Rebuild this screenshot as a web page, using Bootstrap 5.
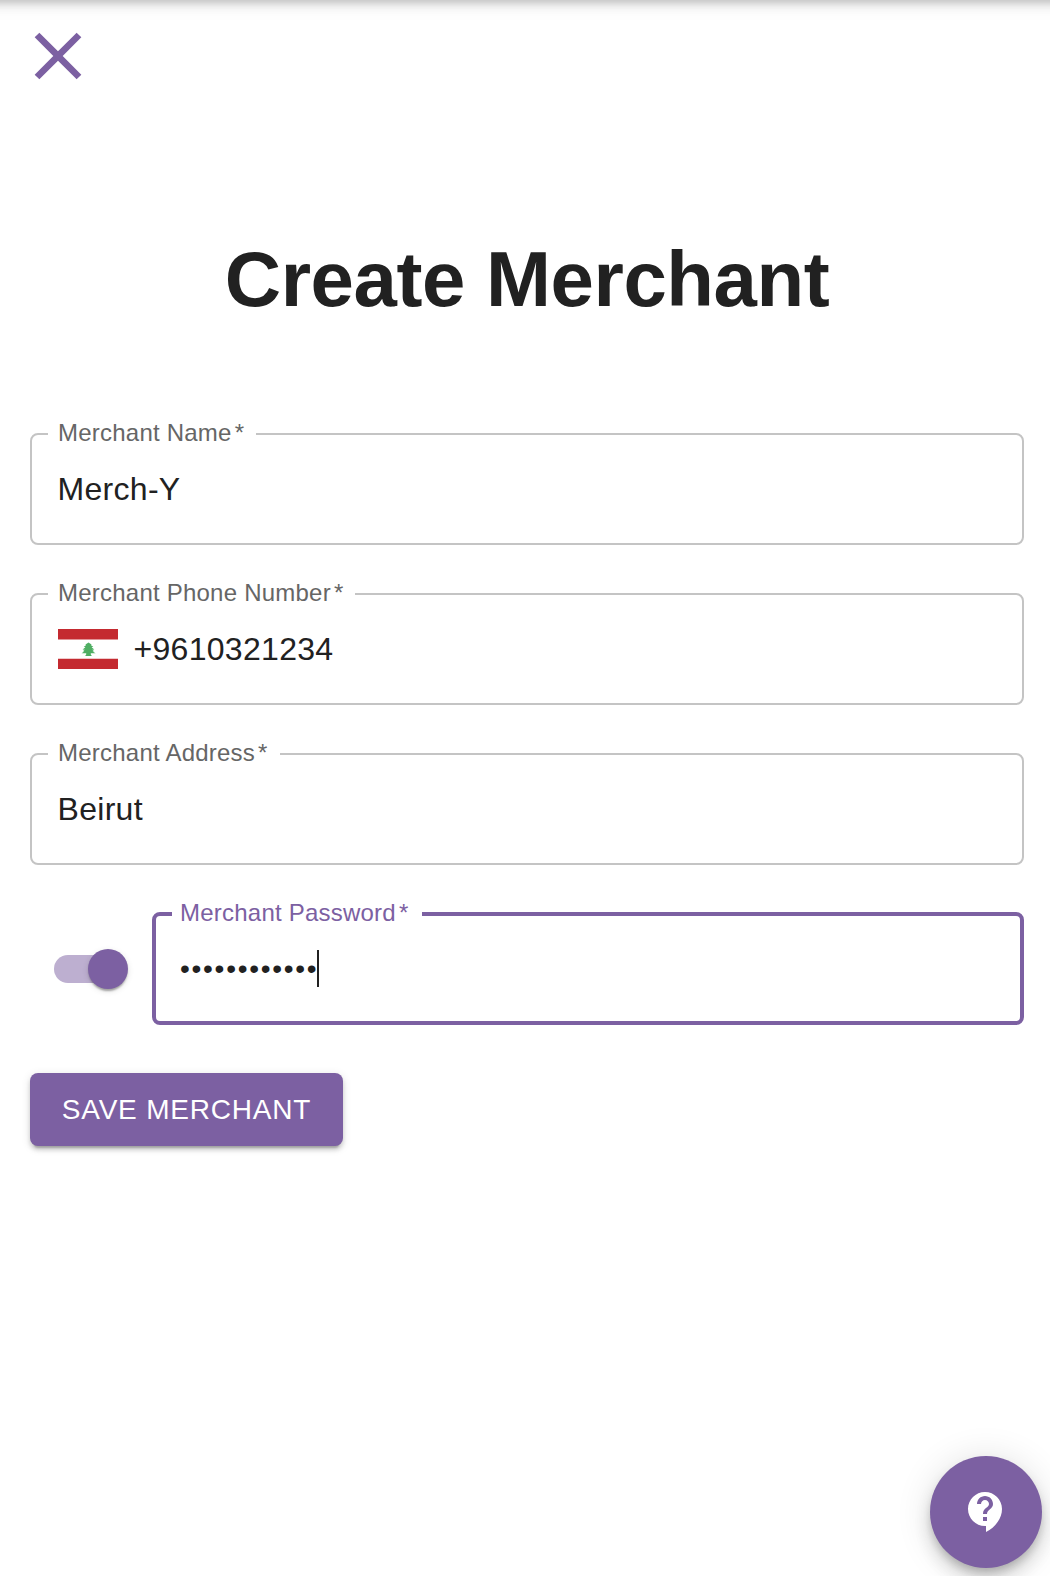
<!DOCTYPE html>
<html lang="en">
<head>
<meta charset="utf-8">
<meta name="viewport" content="width=device-width, initial-scale=1">
<title>Create Merchant</title>
<link href="https://cdn.jsdelivr.net/npm/bootstrap@5.3.0/dist/css/bootstrap.min.css" rel="stylesheet">
<style>
  :root { --brand: #7c60a2; --ink: #212121; }
  body { font-family: "Liberation Sans", Arial, sans-serif; color: var(--ink); background: #fff; min-height: 1576px; overflow: hidden; }
  /* app bar sits just above the dialog, only its shadow shows */
  .app-edge { height: 112px; margin: -112px -30px 0; background: #fff;
    box-shadow: 0 3px 8px -2px rgba(0,0,0,.12), 0 4px 10px rgba(0,0,0,.12), 0 2px 20px rgba(0,0,0,.09); }
  .close-btn { margin: 16px 0 0 18px; width: 80px; height: 80px; color: var(--brand); }
  .page-title { font-size: 78px; font-weight: 700; line-height: 90px; margin: 138px 0 109px; letter-spacing: -.45px; padding-left: 4px; }
  .merchant-form { padding: 0 26px 0 30px; gap: 48px; }
  .outlined { height: 112px; border: 2px solid #c4c4c4; border-radius: 8px; padding: 0 26px 0 25.5px; }
  .outlined > label { left: 16px; top: -16px; height: 28px; line-height: 28px; padding: 0 12px 0 10px; background: #fff;
    font-size: 24px; letter-spacing: .225px; color: #666; white-space: pre; }
  .outlined > label span { margin-left: 3px; }
  .outlined .form-control, .secret { font-size: 32px; letter-spacing: .3px; line-height: 46px; color: var(--ink); }
  .outlined .form-control { border: 0; padding: 0; background: none; box-shadow: none; border-radius: 0; }
  .outlined.active { border: 4px solid var(--brand); padding: 0 24px; height: 113px; margin-top: -1px; }
  .outlined.active > label { color: var(--brand); left: 16px; top: -17px; padding-left: 8px; padding-right: 13px; }
  .outlined .secret { font-size: 28px; letter-spacing: 1.73px; margin-right: -1px; }
  .caret { width: 2px; height: 37px; background: #212121; }
  .switch-box { width: 122px; padding-left: 24px; }
  .track { width: 68px; height: 28px; border-radius: 14px; background: #bdafd0; }
  .thumb { width: 40px; height: 40px; right: -6px; top: -6px; border-radius: 50%; background: var(--brand);
    box-shadow: 0 4px 2px -2px rgba(0,0,0,.2), 0 2px 2px rgba(0,0,0,.14), 0 2px 6px rgba(0,0,0,.12); }
  .save-btn { width: 313px; height: 73px; border-radius: 8px; border: 0; background: var(--brand); color: #fff; font-size: 28px; letter-spacing: .8px; padding: 0;
    box-shadow: 0 6px 2px -4px rgba(0,0,0,.2), 0 4px 4px rgba(0,0,0,.14), 0 2px 10px rgba(0,0,0,.12); }
  .help-fab { right: 8px; bottom: 8px; width: 112px; height: 112px; background: var(--brand); color: #fff; border: 0;
    box-shadow: 0 6px 10px -2px rgba(0,0,0,.2), 0 12px 20px rgba(0,0,0,.14), 0 2px 36px rgba(0,0,0,.12); }
</style>
<script src="https://cdn.jsdelivr.net/npm/bootstrap@5.3.0/dist/js/bootstrap.bundle.min.js"></script>
</head>
<body>
<header class="app-edge"></header>
<main class="d-flex flex-column">
  <button type="button" class="btn close-btn p-0 border-0" aria-label="Close">
    <svg class="d-block" width="80" height="80" viewBox="0 0 24 24" fill="currentColor"><path d="M19 6.41 17.59 5 12 10.59 6.41 5 5 6.41 10.59 12 5 17.59 6.41 19 12 13.41 17.59 19 19 17.59 13.41 12z"/></svg>
  </button>
  <h1 class="page-title text-center">Create Merchant</h1>
  <form class="merchant-form d-flex flex-column">
    <div class="outlined position-relative d-flex align-items-center">
      <label class="position-absolute" for="name">Merchant Name<span>*</span></label>
      <input class="form-control" id="name" type="text" value="Merch-Y">
    </div>
    <div class="outlined position-relative d-flex align-items-center">
      <label class="position-absolute" for="phone">Merchant Phone Number<span>*</span></label>
      <svg class="flex-shrink-0 me-3" width="60" height="40" viewBox="0 0 60 40">
        <path fill="#c42a30" d="M0 0h60v10.5H0zM0 29.7h60V40H0z"/>
        <path fill="#4fae63" d="M30.5 13.6L33.5 15.4 33 16.2 35.3 17.8 33.6 18.3 36.3 20.4 34.2 20.8 36.2 22.3 34.6 22.6 37.6 24.2 33 24.2 32.6 25 33.8 27H27.2L28.4 25 28 24.2 23.6 24.2 26.2 22.6 24.8 22.3 26.8 20.8 24.6 20.4 27.4 18.3 25.8 17.8 28 16.2 27.5 15.4Z"/>
      </svg>
      <input class="form-control" id="phone" type="text" value="+9610321234">
    </div>
    <div class="outlined position-relative d-flex align-items-center">
      <label class="position-absolute" for="address">Merchant Address<span>*</span></label>
      <input class="form-control" id="address" type="text" value="Beirut">
    </div>
    <div class="d-flex align-items-center">
      <div class="switch-box flex-shrink-0" role="switch" aria-checked="true">
        <div class="track position-relative"><span class="thumb position-absolute"></span></div>
      </div>
      <div class="outlined active position-relative d-flex align-items-center flex-grow-1">
        <label class="position-absolute">Merchant Password<span>*</span></label>
        <span class="secret">••••••••••••</span><span class="caret"></span>
      </div>
    </div>
    <button type="button" class="btn save-btn">SAVE MERCHANT</button>
  </form>
</main>
<button type="button" class="btn help-fab rounded-circle position-fixed d-flex align-items-center justify-content-center p-0" aria-label="Help">
  <svg width="48" height="48" viewBox="0 0 24 24" fill="currentColor"><path d="M11.5 2C6.81 2 3 5.81 3 10.5S6.81 19 11.5 19h.5v3c4.86-2.34 8-7 8-11.5C20 5.81 16.19 2 11.5 2zm1 14.5h-2v-2h2v2zm0-3.5h-2c0-3.25 3-3 3-5 0-1.1-.9-2-2-2s-2 .9-2 2h-2c0-2.21 1.79-4 4-4s4 1.79 4 4c0 2.5-3 2.75-3 5z"/></svg>
</button>
</body>
</html>
